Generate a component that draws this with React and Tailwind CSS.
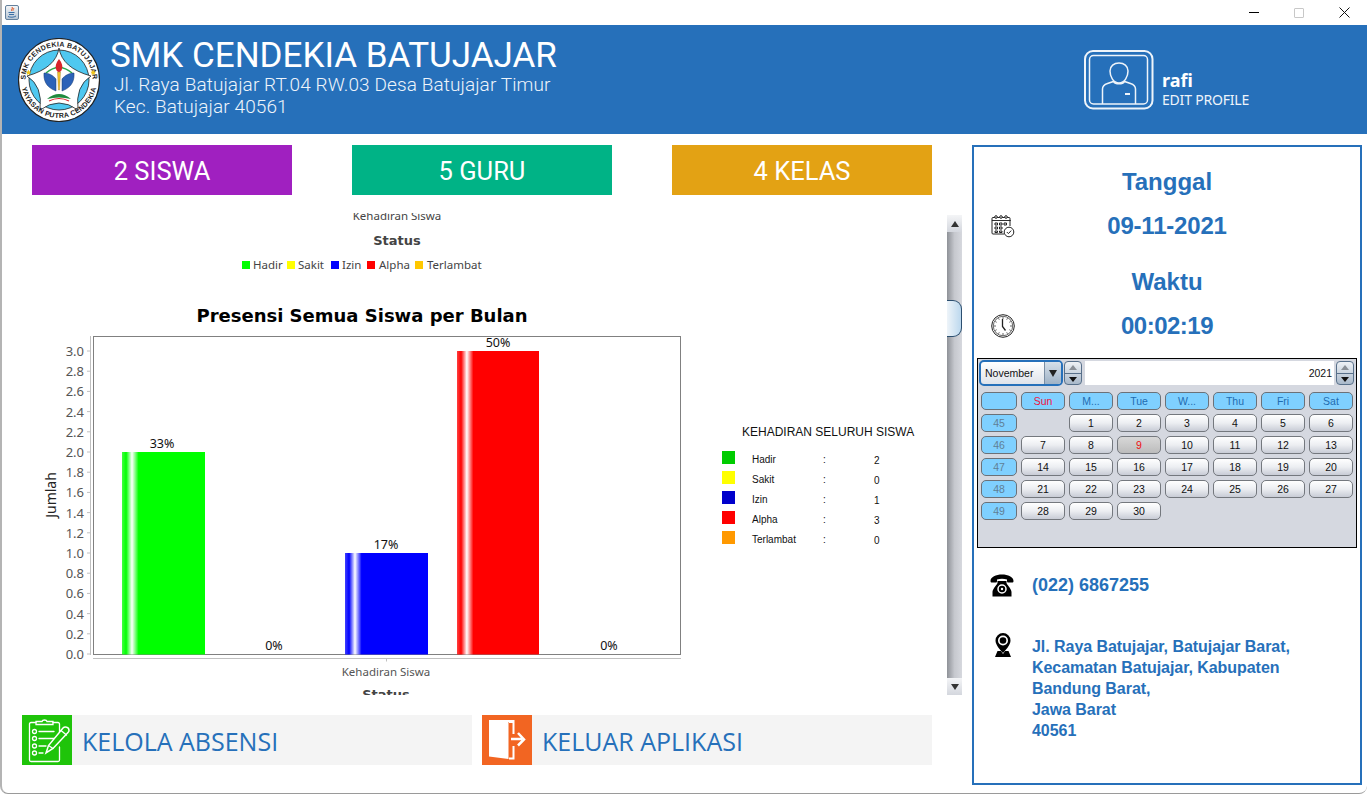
import React from "react";

const stats = [
  { label: "2 SISWA", color: "bg-[#a020c0]" },
  { label: "5 GURU", color: "bg-[#00b386]" },
  { label: "4 KELAS", color: "bg-[#e3a214]" },
];

const legendRows = [
  { name: "Hadir", value: 2, color: "bg-[#00cc00]" },
  { name: "Sakit", value: 0, color: "bg-[#ffff00]" },
  { name: "Izin", value: 1, color: "bg-[#0000cc]" },
  { name: "Alpha", value: 3, color: "bg-[#ff0000]" },
  { name: "Terlambat", value: 0, color: "bg-[#ff9900]" },
];

const dayNames = ["Sun", "M...", "Tue", "W...", "Thu", "Fri", "Sat"];
const weeks = [
  { no: 45, days: [null, 1, 2, 3, 4, 5, 6] },
  { no: 46, days: [7, 8, 9, 10, 11, 12, 13] },
  { no: 47, days: [14, 15, 16, 17, 18, 19, 20] },
  { no: 48, days: [21, 22, 23, 24, 25, 26, 27] },
  { no: 49, days: [28, 29, 30] },
];

function JavaIcon() {
  return (
    <svg width="14" height="15" viewBox="0 0 14 15">
      <defs>
        <linearGradient id="javaBg" x1="0" y1="0" x2="0" y2="1">
          <stop offset="0" stopColor="#f4f6f8" />
          <stop offset="1" stopColor="#b4c4d4" />
        </linearGradient>
      </defs>
      <rect x="0.5" y="0.5" width="13" height="14" rx="1.5" fill="url(#javaBg)" stroke="#64809c" />
      <path d="M7 2c1.5 1.5-1.5 2.500 0 4M8.500 3c.8 1-1 1.500-.3 2.500" fill="none" stroke="#e2521d" strokeWidth="1" />
      <path d="M3.500 7.500h6M4 9.500h5M3 11.500c2 1 6 1 8-.5" fill="none" stroke="#3a6ea5" strokeWidth="1" />
    </svg>
  );
}

function Logo() {
  return (
    <svg width="82" height="84" viewBox="0 0 82 84" className="shrink-0">
      <defs>
        <path id="logoTop" d="M7.500 42a33.500 33.500 0 0 1 67 0" />
        <path id="logoBottom" d="M3 42a38 38 0 0 0 76 0" />
      </defs>
      <ellipse cx="41" cy="42" rx="40.500" ry="41.500" fill="#fff" stroke="#222" strokeWidth="1.200" />
      <circle cx="41" cy="42" r="30" fill="#4fc8f0" stroke="#222" strokeWidth="0.800" />
      <path d="M41 10Q44 30 73 38Q57 48 60 72Q41 58 22 72Q25 48 9 38Q38 30 41 10Z" fill="#fff" stroke="#222" strokeWidth="0.800" />
      <text fontSize="7" fontWeight="700" fill="#222" fontFamily="'Liberation Sans', sans-serif" letterSpacing="0.300">
        <textPath href="#logoTop" startOffset="50%" textAnchor="middle">SMK CENDEKIA BATUJAJAR</textPath>
      </text>
      <text fontSize="7" fontWeight="700" fill="#222" fontFamily="'Liberation Sans', sans-serif" letterSpacing="0.300">
        <textPath href="#logoBottom" startOffset="50%" textAnchor="middle">YAYASAN PUTRA CENDEKIA</textPath>
      </text>
      <path d="M5 42l1 2 2 .3-1.500 1.500.4 2-1.900-1-1.900 1 .4-2L2 44.300l2-.3zM77 42l1 2 2 .3-1.500 1.500.4 2-1.900-1-1.900 1 .4-2-1.500-1.500 2-.3z" fill="#f0c419" transform="translate(6 -6) scale(.9)" />
      <path d="M28 35Q41 24 54 35" fill="none" stroke="#2aa84a" strokeWidth="1.600" />
      <path d="M41 21c3 4 4 7 3 10-.5 2-1.500 3-3 3s-2.500-1-3-3c-1-3 0-6 3-10z" fill="#d8232a" />
      <path d="M39.500 34h3l-.9 18h-1.200z" fill="#f2c230" stroke="#7a5a10" strokeWidth="0.300" />
      <path d="M38 41c-3-4-8-6-12-6-.5 6 1 14 12 18zM44 41c3-4 8-6 12-6 .5 6-1 14-12 18z" fill="#2b62b8" stroke="#17396e" strokeWidth="0.500" />
      <path d="M29 61Q41 51 53 61Q41 58 29 61Z" fill="#1f8a3d" />
      <path d="M31 63Q41 58 51 63" fill="none" stroke="#d8232a" strokeWidth="1.200" />
    </svg>
  );
}

function ProfileIcon() {
  return (
    <svg width="70" height="60" viewBox="0 0 70 60" className="shrink-0" fill="none" stroke="#eef4fa" strokeWidth="1.500">
      <rect x="1" y="1" width="67.500" height="57.500" rx="8" strokeWidth="2" />
      <rect x="5.500" y="5.500" width="58" height="48.500" rx="4" />
      <path d="M26 15c0-5 4-8 9-8s9 3 9 8-3 12-9 12-9-7-9-12z" transform="translate(0 6)" />
      <path d="M18.500 54V39c0-3 2-4.500 5-5.500l6-2c2 3 9 3 11 0l6 2c3 1 5 2.500 5 5.500v15" />
      <path d="M41 44h5" strokeWidth="2" />
    </svg>
  );
}

function CalendarIcon() {
  return (
    <svg width="24" height="24" viewBox="0 0 24 24" fill="none" stroke="#222" strokeWidth="1">
      <path d="M19 12V4.500a1 1 0 0 0-1-1H2a1 1 0 0 0-1 1V19a1 1 0 0 0 1 1h11" />
      <path d="M1 6.500h21" transform="scale(.9 1)" />
      <circle cx="5" cy="3" r="1.300" fill="#fff" />
      <circle cx="10" cy="3" r="1.300" fill="#fff" />
      <circle cx="15" cy="3" r="1.300" fill="#fff" />
      <path d="M4 9h2.500v2H4zM8.500 9H11v2H8.500zM13 9h2.500v2H13zM4 13h2.500v2H4zM8.500 13H11v2H8.500zM4 17h2.500v1.500H4zM8.500 17H11v1.500H8.500z" />
      <circle cx="18" cy="18" r="4.800" fill="#fff" />
      <path d="M15.800 18l1.600 1.600 2.800-3" />
    </svg>
  );
}

function ClockIcon() {
  return (
    <svg width="24" height="24" viewBox="0 0 24 24" fill="none" stroke="#222">
      <circle cx="12" cy="12" r="11.300" strokeWidth="1" />
      <circle cx="12" cy="12" r="9.700" strokeWidth="0.700" />
      <path d="M12 3v2M12 19v2M3 12h2M19 12h2M7.500 4.200l.8 1.500M16.500 4.200l-.8 1.500M7.500 19.800l.8-1.500M16.500 19.800l-.8-1.500M4.200 7.500l1.500.8M4.200 16.500l1.500-.8M19.800 7.500l-1.500.8M19.800 16.500l-1.500-.8" strokeWidth="0.700" />
      <path d="M11.500 5v7.500l3 4" strokeWidth="1.300" />
    </svg>
  );
}

function PhoneIcon() {
  return (
    <svg width="24" height="23" viewBox="0 0 24 23">
      <path d="M.5 7C.5 3 6 .5 12 .5S23.500 3 23.500 7c0 1-.5 1.500-1.500 1.500h-3.500c-1 0-1.500-.5-1.500-1.500V5.500c-3-1-7-1-10 0V7c0 1-.5 1.500-1.500 1.500H2C1 8.500.5 8 .5 7z" fill="#000" />
      <path d="M7.500 7h9v2c0 1 5 6 5 9v4.500h-19V18c0-3 5-8 5-9z" fill="#000" />
      <circle cx="12" cy="15" r="4" fill="none" stroke="#fff" strokeWidth="1.500" />
      <circle cx="12" cy="15" r="1.200" fill="#fff" />
    </svg>
  );
}

function PinIcon() {
  return (
    <svg width="18" height="24" viewBox="0 0 18 24">
      <path d="M9 0a7.500 7.500 0 0 0-7.500 7.500C1.500 12 6 16.500 9 20c3-3.500 7.500-8 7.500-12.500A7.500 7.500 0 0 0 9 0z" fill="#000" />
      <circle cx="9" cy="7.500" r="5" fill="#fff" />
      <circle cx="9" cy="7.500" r="3.300" fill="#000" />
      <path d="M3.500 18h3.500L9 21l2-3h3.500l2.500 6H1z" fill="#000" />
    </svg>
  );
}

function KelolaIcon() {
  return (
    <svg width="50" height="50" viewBox="0 0 50 50" fill="none" stroke="#fff" strokeWidth="1.300" strokeLinecap="round">
      <path d="M14 7.500H9a1.500 1.500 0 0 0-1.500 1.500v36A1.500 1.500 0 0 0 9 46.500h27a1.500 1.500 0 0 0 1.500-1.500V32M37.500 17V9A1.500 1.500 0 0 0 36 7.500h-5" />
      <path d="M14 9.500V6.500h6c.5-2 4.500-2 5 0h6v3z" />
      <circle cx="12.500" cy="16.500" r="2" />
      <circle cx="12.500" cy="23.500" r="2" />
      <circle cx="12.500" cy="31" r="2" />
      <circle cx="12.500" cy="38" r="2" />
      <path d="M17 16.500h15M17 23.500h15M17 31h7M17 38h4" />
      <path d="M24 38l2.500-7.500L41 13c1.500-1.500 6-1.500 6 2.500 0 1-.5 1.500-1 2L31 33.500z" strokeWidth="1.500" />
      <path d="M26.500 30.500L31 33.500M39 15.500l5.500 4.500" />
    </svg>
  );
}

function KeluarIcon() {
  return (
    <svg width="50" height="50" viewBox="0 0 50 50">
      <path d="M7 5h24v2H26.500v37L7 41.500z" fill="#fff" />
      <path d="M31 5h1.500v14h-2V8H27V5z" fill="#fff" />
      <path d="M30.500 31h2v13.500H27v-2h3.500z" fill="#fff" />
      <path d="M29 24h11M36 18l6 6.500-6 6" fill="none" stroke="#fff" strokeWidth="2.500" />
    </svg>
  );
}

function SpinnerButton() {
  return (
    <div className="w-[18px] h-[24px] rounded-[4px] border border-[#58708a] bg-linear-to-b from-[#eef1f5] to-[#a9b9ca] flex flex-col items-center justify-center gap-[3px] shrink-0">
      <span className="w-0 h-0 border-x-[4px] border-x-transparent border-b-[5px] border-b-[#8a8f96]" />
      <span className="w-[16px] h-px bg-[#58708a]" />
      <span className="w-0 h-0 border-x-[4px] border-x-transparent border-t-[5px] border-t-[#111]" />
    </div>
  );
}

function Calendar() {
  const headBtn = "h-[18px] pt-px rounded-[5px] border border-[#6b7178] bg-[#7fd0ff] flex items-center justify-center";
  const dayBtn = "h-[18px] pt-px rounded-[5px] border border-[#74787e] bg-linear-to-b from-white via-[#eceef2] to-[#c8ccd6] flex items-center justify-center text-[#111]";
  return (
    <div className="mt-[17px] mx-[3px] h-[190px] border border-black bg-[#d5d8e0] text-[10.5px] font-normal font-['Liberation_Sans',sans-serif]">
      <div className="flex items-center pl-[1px] pr-[2px] pt-[1px] h-[27px]">
        <div className="w-[84px] h-[26px] rounded-[5px] border-2 border-[#2670ba] bg-linear-to-b from-white to-[#dfe3ea] flex items-center justify-between shrink-0">
          <span className="pl-[4px] pt-px text-[#111]">November</span>
          <span className="w-[17px] h-full bg-linear-to-b from-[#d6e0ea] to-[#9fb2c6] rounded-r-[3px] flex items-center justify-center border-l border-[#7a8ea4]">
            <span className="w-0 h-0 border-x-[4px] border-x-transparent border-t-[7px] border-t-[#222]" />
          </span>
        </div>
        <div className="ml-px">
          <SpinnerButton />
        </div>
        <div className="ml-[3px] flex-1 h-[24px] pt-px bg-white flex items-center justify-end pr-[2px] text-[#111]">2021</div>
        <div className="ml-[2px]">
          <SpinnerButton />
        </div>
      </div>
      <div className="grid grid-cols-[36px_repeat(7,44px)] gap-x-[4px] gap-y-[4px] auto-rows-[18px] pl-[3px] pt-[6px]">
        <div className={headBtn} />
        {dayNames.map((d) => (
          <div key={d} className={`${headBtn} ${d === "Sun" ? "text-[#f01040]" : "text-[#1f6cb0]"}`}>{d}</div>
        ))}
        {weeks.map((w) => (
          <React.Fragment key={w.no}>
            <div className={`${headBtn} text-[#5f7f96]`}>{w.no}</div>
            {w.days.map((d, i) =>
              d === null ? (
                <div key={i} />
              ) : d === 9 ? (
                <div key={i} className="h-[18px] pt-px rounded-[5px] border border-[#74787e] bg-linear-to-b from-[#d8d8d8] to-[#bcbcbc] flex items-center justify-center text-[#f01010]">{d}</div>
              ) : (
                <div key={i} className={dayBtn}>{d}</div>
              )
            )}
          </React.Fragment>
        ))}
      </div>
    </div>
  );
}

function Bar({ x, top, fill, w = 83 }) {
  return <rect x={x} y={top} width={w} height={654.5 - top} fill={`url(#${fill})`} />;
}

function BarGradient({ id, color }) {
  return (
    <linearGradient id={id} x1="0" y1="0" x2="1" y2="0">
      <stop offset="0" stopColor={color} stopOpacity="0.75" />
      <stop offset="0.05" stopColor={color} />
      <stop offset="0.12" stopColor="#fff" />
      <stop offset="0.2" stopColor={color} />
      <stop offset="1" stopColor={color} />
    </linearGradient>
  );
}

function Chart() {
  const ticks = [];
  for (let i = 0; i <= 15; i++) {
    ticks.push({ label: (i * 0.2).toFixed(1), y: 654 - i * 20.2 });
  }
  const sans = "'Noto Sans', sans-serif";
  const topLegend = [
    { name: "Hadir", sq: 242, tx: 253, color: "#00ff00" },
    { name: "Sakit", sq: 287, tx: 298, color: "#ffff00" },
    { name: "Izin", sq: 331, tx: 342, color: "#0000ff" },
    { name: "Alpha", sq: 367, tx: 379, color: "#ff0000" },
    { name: "Terlambat", sq: 415, tx: 427, color: "#ffc800" },
  ];
  return (
    <svg width="680" height="482" viewBox="22 213 680 482" className="shrink-0" fontFamily={sans}>
      <defs>
        <BarGradient id="barGreen" color="#00ff00" />
        <BarGradient id="barBlue" color="#0000ff" />
        <BarGradient id="barRed" color="#ff0000" />
      </defs>
      <text x="397" y="220" textAnchor="middle" fontSize="11.500" fill="#444">Kehadiran Siswa</text>
      <text x="397" y="245" textAnchor="middle" fontSize="13" fontWeight="700" fill="#444" fontFamily="'DejaVu Sans', sans-serif">Status</text>
      {topLegend.map((l) => (
        <g key={l.name}>
          <rect x={l.sq} y="261" width="8" height="8" fill={l.color} />
          <text x={l.tx} y="269" fontSize="11.500" fill="#444">{l.name}</text>
        </g>
      ))}
      <text x="362" y="322" textAnchor="middle" fontSize="18" fontWeight="700" fill="#000" fontFamily="'DejaVu Sans', sans-serif">Presensi Semua Siswa per Bulan</text>

      <rect x="93.500" y="336.500" width="587" height="318" fill="#fff" stroke="#808080" />
      <path d="M90.500 336v319M93 658.500h588M386.500 658.500v3" stroke="#c0c0c0" fill="none" />
      {ticks.map((t) => (
        <g key={t.label}>
          <path d={`M87 ${t.y}h3`} stroke="#c0c0c0" />
          <text x="84" y={t.y + 5} textAnchor="end" fontSize="13" fill="#555">{t.label}</text>
        </g>
      ))}
      <text transform="translate(56 495) rotate(-90)" textAnchor="middle" fontSize="14" fill="#222">Jumlah</text>

      <Bar x={122} top={452} fill="barGreen" />
      <Bar x={345} top={553} fill="barBlue" />
      <Bar x={457} top={351} fill="barRed" w={82} />

      <g fontSize="12.500" fill="#111" textAnchor="middle">
        <text x="162" y="448">33%</text>
        <text x="274" y="650">0%</text>
        <text x="386" y="549">17%</text>
        <text x="498" y="347">50%</text>
        <text x="609" y="650">0%</text>
      </g>
      <text x="386" y="676" textAnchor="middle" fontSize="11.500" fill="#555">Kehadiran Siswa</text>
      <text x="386" y="699" textAnchor="middle" fontSize="13" fontWeight="700" fill="#444" fontFamily="'DejaVu Sans', sans-serif">Status</text>
    </svg>
  );
}

function ChartLegend() {
  return (
    <div className="pl-[20px] pt-[212px] font-['Liberation_Sans',sans-serif] text-[#111]">
      <div className="pl-[20px] text-[12px] leading-[14px] whitespace-nowrap">KEHADIRAN SELURUH SISWA</div>
      <div className="mt-[12px] flex flex-col">
        {legendRows.map((r) => (
          <div key={r.name} className="flex h-[20px] text-[10px]">
            <span className={`w-[13px] h-[13px] ${r.color}`} />
            <span className="ml-[17px] w-[71px] leading-[17px]">{r.name}</span>
            <span className="w-[51px] leading-[17px]">:</span>
            <span className="leading-[20px]">{r.value}</span>
          </div>
        ))}
      </div>
    </div>
  );
}

function ScrollBar() {
  const arrowBtn = "h-[17px] w-[15px] bg-linear-to-b from-[#f4f5f7] to-[#d4d7de] flex items-center justify-center shrink-0";
  return (
    <div className="w-[15px] h-[482px] flex flex-col pt-[2px] shrink-0">
      <div className={arrowBtn}>
        <span className="w-0 h-0 border-x-[4px] border-x-transparent border-b-[6px] border-b-[#333]" />
      </div>
      <div className="flex-1 bg-linear-to-r from-[#8f9298] via-[#c6c8ce] to-[#d6d8de] pt-[68px]">
        <div className="h-[37px] w-[15px] rounded-r-[9px] border border-l-0 border-[#2c4f70] bg-linear-to-r from-[#eef4f9] to-[#bcd8ee]" />
      </div>
      <div className={arrowBtn}>
        <span className="w-0 h-0 border-x-[4px] border-x-transparent border-t-[6px] border-t-[#333]" />
      </div>
    </div>
  );
}

function ActionButton({ icon, color, label }) {
  return (
    <div className="w-[450px] h-[50px] flex bg-[#f4f4f4]">
      <div className={`w-[50px] h-[50px] shrink-0 ${color}`}>{icon}</div>
      <div className="pl-[10px] flex items-center text-[25px] text-[#2670ba] font-['Open_Sans',sans-serif] pt-[4px]">{label}</div>
    </div>
  );
}

export default function App() {
  return (
    <div className="w-[1369px] h-[795px] bg-white overflow-hidden">
      <div className="w-[1367px] h-[794px] border-l-2 border-b border-l-[#b4b4b4] border-b-[#9a9a9a] rounded-bl-lg rounded-br-lg bg-white flex flex-col">
        <div className="h-[25px] flex items-center justify-between shrink-0 pl-[3px] bg-white">
          <JavaIcon />
          <div className="flex items-center">
            <span className="w-[10px] h-px bg-black" />
            <span className="ml-[35px] w-[10px] h-[10px] border border-[#c8c8c8] rounded-[1px]" />
            <svg className="ml-[35px] mr-[17px]" width="11" height="11" viewBox="0 0 11 11" fill="none" stroke="#111">
              <path d="M.5.5l10 10M10.500.5l-10 10" />
            </svg>
          </div>
        </div>

        <div className="h-[109px] bg-[#2670ba] flex items-center shrink-0 text-white">
          <div className="ml-[16px]">
            <Logo />
          </div>
          <div className="ml-[10px] w-[972px] font-['Roboto',sans-serif] pb-[4px]">
            <div className="text-[35px] leading-[37px]">SMK CENDEKIA BATUJAJAR</div>
            <div className="pl-[4px] text-[19px] leading-[22px] tracking-[0.1px] font-light text-[#eef4fa]">Jl. Raya Batujajar RT.04 RW.03 Desa Batujajar Timur</div>
            <div className="pl-[4px] text-[19px] leading-[22px] tracking-[0.1px] font-light text-[#eef4fa]">Kec. Batujajar 40561</div>
          </div>
          <div className="ml-[2px]">
            <ProfileIcon />
          </div>
          <div className="ml-[8px] pt-[17px] font-['Noto_Sans',sans-serif]">
            <div className="text-[18px] leading-[22px] font-bold">rafi</div>
            <div className="text-[14px] leading-[17px] tracking-[-0.2px] text-[#eef4fa]">EDIT PROFILE</div>
          </div>
        </div>

        <div className="flex flex-1 min-h-0">
          <div className="ml-[20px] w-[940px] shrink-0">
            <div className="mt-[11px] pl-[10px] flex gap-[60px]">
              {stats.map((s) => (
                <div key={s.label} className={`w-[260px] h-[50px] pt-[2px] flex items-center justify-center text-white text-[25.5px] font-['Roboto',sans-serif] ${s.color}`}>
                  {s.label}
                </div>
              ))}
            </div>
            <div className="mt-[18px] h-[482px] flex bg-white">
              <Chart />
              <div className="w-[245px] shrink-0">
                <ChartLegend />
              </div>
              <ScrollBar />
            </div>
            <div className="mt-[20px] flex gap-[10px]">
              <ActionButton icon={<KelolaIcon />} color="bg-[#1fc40a]" label="KELOLA ABSENSI" />
              <ActionButton icon={<KeluarIcon />} color="bg-[#f26522]" label="KELUAR APLIKASI" />
            </div>
          </div>

          <div className="ml-[10px] mt-[11px] w-[390px] h-[640px] border-2 border-[#2670ba] text-[#2670ba] font-['Liberation_Sans',sans-serif] font-bold shrink-0">
            <div className="mt-[20px] h-[30px] text-center text-[24px] leading-[30px]">Tanggal</div>
            <div className="mt-[14px] h-[30px] grid grid-cols-[50px_1fr_50px] items-center pl-[17px]">
              <CalendarIcon />
              <div className="text-center text-[24px] leading-[30px] tracking-[-0.2px] -ml-[17px]">09-11-2021</div>
            </div>
            <div className="mt-[26px] h-[30px] text-center text-[24px] leading-[30px]">Waktu</div>
            <div className="mt-[14px] h-[30px] grid grid-cols-[50px_1fr_50px] items-center pl-[17px]">
              <ClockIcon />
              <div className="text-center text-[24px] leading-[30px] tracking-[-0.5px] -ml-[17px]">00:02:19</div>
            </div>
            <Calendar />
            <div className="mt-[22px] h-[30px] flex items-center pl-[16px]">
              <PhoneIcon />
              <div className="ml-[18px] text-[18px]">(022) 6867255</div>
            </div>
            <div className="mt-[33px] flex pl-[20px]">
              <PinIcon />
              <div className="ml-[20px] mt-[3px] text-[16px] leading-[21px] tracking-[-0.05px]">
                Jl. Raya Batujajar, Batujajar Barat,
                <br />
                Kecamatan Batujajar, Kabupaten
                <br />
                Bandung Barat,
                <br />
                Jawa Barat
                <br />
                40561
              </div>
            </div>
          </div>
        </div>
      </div>
    </div>
  );
}
